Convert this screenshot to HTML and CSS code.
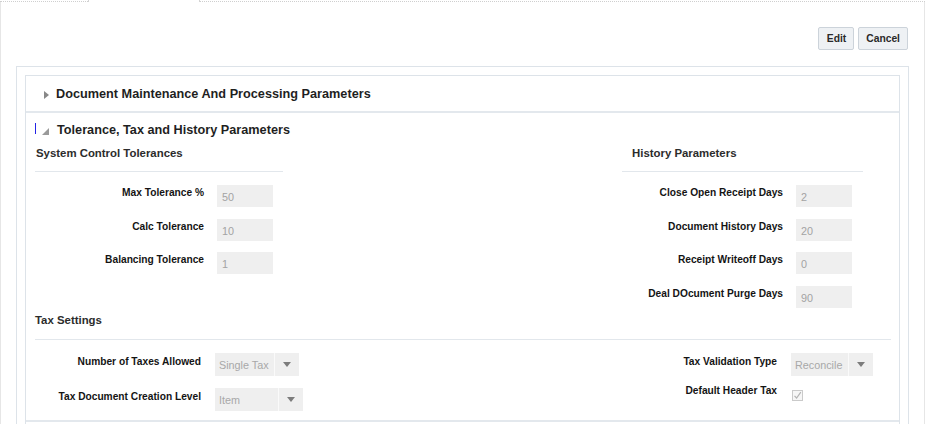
FILE: index.html
```html
<!DOCTYPE html>
<html lang="en">
<head>
<meta charset="utf-8">
<title>Tolerance, Tax and History Parameters</title>
<link rel="stylesheet" href="styles.css">
</head>
<body>
<div class="page">
  <div class="tabs">
    <div class="tab-line tab-first"></div>
    <div class="tab-active"></div>
    <div class="tab-line tab-fill"></div>
  </div>
  <div class="content">
    <div class="toolbar">
      <button class="btn btn-edit">Edit</button>
      <button class="btn">Cancel</button>
    </div>
    <div class="panel">
      <div class="inner">
        <div class="sec-head collapsed">
          <span class="tri-right"></span>
          <span class="sec-title">Document Maintenance And Processing Parameters</span>
        </div>
        <div class="sec-head expanded">
          <span class="cursor"></span>
          <svg class="tri-down" width="7" height="7" viewBox="0 0 7 7"><polygon points="7,0 7,7 0,7" fill="#9a9a9a"/></svg>
          <span class="sec-title">Tolerance, Tax and History Parameters</span>
        </div>
        <div class="sec-body">
          <div class="columns">
            <div class="col col-left">
              <div class="sub-title">System Control Tolerances</div>
              <div class="form form-left">
                <div class="lbl">Max Tolerance %</div><div class="input">50</div>
                <div class="lbl">Calc Tolerance</div><div class="input">10</div>
                <div class="lbl">Balancing Tolerance</div><div class="input">1</div>
              </div>
            </div>
            <div class="col col-right">
              <div class="sub-title">History Parameters</div>
              <div class="form form-right">
                <div class="lbl">Close Open Receipt Days</div><div class="input">2</div>
                <div class="lbl">Document History Days</div><div class="input">20</div>
                <div class="lbl">Receipt Writeoff Days</div><div class="input">0</div>
                <div class="lbl">Deal DOcument Purge Days</div><div class="input">90</div>
              </div>
            </div>
          </div>
          <div class="tax">
            <div class="sub-title tax-title">Tax Settings</div>
            <div class="tax-rows">
              <div class="tax-left">
                <div class="lbl">Number of Taxes Allowed</div>
                <div class="select"><span class="select-text st-single">Single Tax</span><span class="select-btn"><span class="arrow"></span></span></div>
                <div class="lbl">Tax Document Creation Level</div>
                <div class="select"><span class="select-text st-item">Item</span><span class="select-btn"><span class="arrow"></span></span></div>
              </div>
              <div class="tax-right">
                <div class="lbl">Tax Validation Type</div>
                <div class="select"><span class="select-text st-rec">Reconcile</span><span class="select-btn"><span class="arrow"></span></span></div>
                <div class="lbl">Default Header Tax</div>
                <div class="check"><svg width="9" height="9" viewBox="0 0 9 9"><polyline points="1.5,4.8 3.6,7 7.8,1.2" fill="none" stroke="#b4b4b4" stroke-width="1.2"/></svg></div>
              </div>
            </div>
          </div>
        </div>
        <div class="sec-rest"></div>
      </div>
    </div>
  </div>
</div>
</body>
</html>
```

FILE: styles.css
```css
html, body {
  margin: 0;
  padding: 0;
  background: #ffffff;
  overflow: hidden;
}

body {
  font-family: "Liberation Sans", Arial, sans-serif;
  color: #222;
}

.page {
  width: 925px;
  height: 424px;
  overflow: hidden;
}

.tabs {
  display: flex;
  height: 2px;
}

.tab-line {
  height: 1px;
  border-bottom: 1px dotted #cfcfcf;
}

.tab-first {
  width: 88px;
}

.tab-active {
  width: 110px;
  height: 2px;
  border-left: 1px solid #d4d4d4;
  border-right: 1px solid #d4d4d4;
}

.tab-fill {
  flex: 1;
}

.content {
  border-left: 1px solid #e6e6e6;
  border-right: 1px solid #e6e6e6;
  padding: 25px 15px 0;
  height: 430px;
}

.toolbar {
  display: flex;
  justify-content: flex-end;
  gap: 4px;
  height: 23px;
  margin: 0 1px 16px 0;
}

.btn {
  height: 23px;
  padding: 0 7px;
  font-family: "Liberation Sans", Arial, sans-serif;
  font-size: 10.3px;
  font-weight: bold;
  color: #2a2a2a;
  background: #eef1f4;
  border: 1px solid #ccd3da;
  border-radius: 2px;
}

.btn-edit {
  padding: 0 7px 0 8px;
}

.panel {
  border: 1px solid #dde3e9;
  padding: 8px 8px 0;
}

.inner {
  border: 1px solid #dde3e9;
  border-bottom: none;
}

.sec-head {
  display: flex;
  align-items: center;
}

.sec-head.collapsed {
  height: 33px;
  padding: 2px 0 0 18px;
  border-bottom: 2px solid #e3e8ed;
}

.sec-head.expanded {
  height: 32px;
  padding: 1px 0 0 9px;
}

.tri-right {
  width: 0;
  height: 0;
  border-left: 5px solid #888;
  border-top: 4px solid transparent;
  border-bottom: 4px solid transparent;
  margin-right: 7px;
}

.cursor {
  width: 1px;
  height: 11px;
  background: #2323e6;
  margin: 0 6px 4px 0;
}

.tri-down {
  display: block;
  margin: 2px 8px 0 0;
}

.sec-title {
  font-size: 12.7px;
  font-weight: bold;
  color: #1f1f1f;
  line-height: 15px;
}

.sec-body {
  padding: 0 8px 9px 9px;
  border-bottom: 2px solid #e3e8ed;
}

.columns {
  display: flex;
  justify-content: space-between;
  padding-right: 28px;
}

.col-left {
  width: 248px;
}

.col-right {
  width: 241px;
}

.sub-title {
  font-size: 11.4px;
  font-weight: bold;
  line-height: 14px;
  color: #2c2c2c;
  padding-bottom: 11px;
  border-bottom: 1px solid #e2e7ec;
}

.col-left .sub-title {
  padding-left: 1px;
}

.col-right .sub-title {
  padding-left: 10px;
}

.form {
  display: grid;
  margin-top: 13px;
  row-gap: 11.67px;
  column-gap: 13px;
}

.form-left {
  grid-template-columns: 169px 56px;
}

.form-right {
  grid-template-columns: 161px 56px;
}

.lbl {
  font-size: 10.2px;
  font-weight: bold;
  line-height: 13px;
  color: #141414;
  text-align: right;
  padding-top: 1px;
  white-space: nowrap;
}

.input {
  height: 22px;
  box-sizing: border-box;
  padding: 1px 5px 0;
  background: #efefef;
  font-size: 10.8px;
  line-height: 22px;
  color: #a3a3a3;
}

.tax {
  margin-top: 5px;
}

.tax-title {
  padding-left: 0;
  padding-bottom: 12px;
}

.tax-rows {
  display: flex;
  justify-content: space-between;
  align-items: flex-start;
  padding-right: 18px;
  margin-top: 13px;
}

.tax-left {
  display: grid;
  grid-template-columns: 166px auto;
  column-gap: 14px;
  row-gap: 12px;
  justify-items: start;
}

.tax-left .lbl {
  justify-self: end;
  padding-top: 2px;
}

.tax-right {
  display: grid;
  grid-template-columns: auto auto;
  column-gap: 14px;
  row-gap: 6px;
  justify-items: start;
}

.tax-right .lbl {
  justify-self: end;
  padding-top: 2px;
}

.select {
  display: flex;
  height: 23px;
  background: #efefef;
}

.select-text {
  box-sizing: border-box;
  padding: 1px 0 0 4px;
  font-size: 10.8px;
  line-height: 23px;
  color: #a8a8a8;
  white-space: nowrap;
}

.st-single {
  width: 59px;
}

.st-item {
  width: 63px;
}

.st-rec {
  width: 57px;
}

.select-btn {
  width: 24px;
  border-left: 1px solid #fafafa;
  display: flex;
  align-items: center;
  justify-content: center;
}

.arrow {
  width: 0;
  height: 0;
  border-top: 5px solid #7c7c7c;
  border-left: 4px solid transparent;
  border-right: 4px solid transparent;
  margin-top: 1px;
}

.check {
  width: 11px;
  height: 11px;
  box-sizing: border-box;
  border: 1px solid #cacaca;
  background: #f6f6f6;
  margin: 8px 0 0 1px;
  display: flex;
  align-items: center;
  justify-content: center;
}

.check svg {
  display: block;
}

.sec-rest {
  height: 30px;
}
```
